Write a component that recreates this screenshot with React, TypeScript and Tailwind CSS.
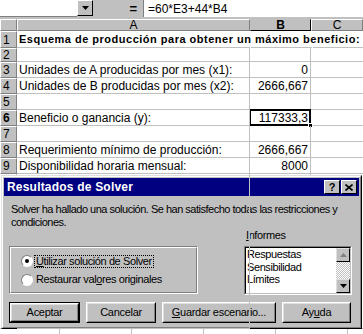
import React from "react";

const font = { fontFamily: '"Liberation Sans", Arial, sans-serif' };

function RowHead({ n, h, bold }: { n: string; h: string; bold?: boolean }) {
  return (
    <div
      className={`w-[17px] shrink-0 ${h} bg-[#c0c0c0] border-t border-l border-t-white border-l-white border-r border-b border-r-[#808080] border-b-[#808080] text-[12px] leading-none flex items-center pl-[2px] ${bold ? "font-bold" : ""}`}
    >
      {n}
    </div>
  );
}

function Row({
  n,
  h,
  a,
  b,
  bold,
  sel,
}: {
  n: string;
  h: string;
  a?: string;
  b?: string;
  bold?: boolean;
  sel?: boolean;
}) {
  return (
    <div className={`flex ${h}`}>
      <RowHead n={n} h={h} bold={sel} />
      <div
        className={`w-[233px] shrink-0 border-b border-[#c0c0c0] flex items-center pl-[2px] whitespace-nowrap overflow-visible z-10 ${bold ? "font-bold text-[11px] tracking-[0.5px] border-r-0" : "text-[12px] border-r"}`}
      >
        {a}
      </div>
      <div
        className={`w-[61px] shrink-0 border-b border-[#c0c0c0] flex items-center justify-end pr-[2px] text-[12px] relative ${bold ? "border-r-0 ml-[1px]" : "border-r"}`}
      >
        {sel && (
          <div className="absolute left-[-1px] top-[-1px] right-[-1px] bottom-[-1px] border-2 border-black">
            <div className="absolute right-[-4px] bottom-[-4px] w-[5px] h-[5px] bg-black border border-white" />
          </div>
        )}
        <span className="relative">{b}</span>
      </div>
      <div className={`flex-1 border-b border-[#c0c0c0] ${bold ? "ml-[1px]" : ""}`} />
    </div>
  );
}

function Btn({
  children,
  w,
  def,
}: {
  children: React.ReactNode;
  w: string;
  def?: boolean;
}) {
  const inner = (
    <div className="flex-1 flex bg-[#c0c0c0] border border-t-white border-l-white border-r-black border-b-black">
      <div className="flex-1 border border-t-[#dfdfdf] border-l-[#dfdfdf] border-r-[#808080] border-b-[#808080] flex items-center justify-center text-[11px] tracking-[-0.3px]">
        {children}
      </div>
    </div>
  );
  if (def) {
    return <div className={`${w} h-[21px] border border-black flex`}>{inner}</div>;
  }
  return <div className={`${w} h-[21px] flex`}>{inner}</div>;
}

function Radio({ checked }: { checked?: boolean }) {
  return (
    <div className="w-[12px] h-[12px] shrink-0 rounded-full bg-white border border-t-[#808080] border-l-[#808080] border-r-white border-b-white flex items-center justify-center">
      {checked && <div className="w-[4px] h-[4px] rounded-full bg-black" />}
    </div>
  );
}

export default function App() {
  return (
    <div
      className="w-[363px] h-[334px] overflow-hidden relative bg-white text-black"
      style={font}
    >
      {/* formula bar */}
      <div className="h-[17px] bg-[#c0c0c0] flex">
        <div className="w-[77px] bg-white border-b border-[#808080]" />
        <div className="w-[16px] h-[16px] bg-[#c0c0c0] border-t border-l border-white border-r border-b border-r-black border-b-black flex items-center justify-center">
          <svg width="7" height="4" viewBox="0 0 7 4">
            <path d="M0 0h7L3.5 4z" fill="#000" />
          </svg>
        </div>
        <div className="w-[50px] flex items-center justify-end pr-[6px] text-[13px] font-bold">
          =
        </div>
        <div className="flex-1 bg-white border-l border-[#808080] flex items-center pl-[4px] text-[12px]">
          =60*E3+44*B4
        </div>
      </div>
      <div className="h-[2px] bg-[#c0c0c0]" />
      {/* header row */}
      <div className="flex h-[12px] text-[12px] leading-none">
        <div className="w-[17px] bg-[#c0c0c0] border-t border-l border-white border-r border-b border-r-[#808080] border-b-[#808080]" />
        <div className="w-[233px] bg-[#c0c0c0] border-t border-l border-white border-r border-b border-r-[#808080] border-b-[#808080] flex items-center justify-center">
          A
        </div>
        <div className="w-[61px] bg-[#c0c0c0] border-t border-l border-[#c0c0c0] border-r border-b border-r-black border-b-black flex items-center justify-center font-bold">
          B
        </div>
        <div className="flex-1 bg-[#c0c0c0] border-t border-l border-white border-r border-b border-r-[#808080] border-b-[#808080] flex items-center justify-center">
          C
        </div>
      </div>
      <Row n="1" h="h-[17px]" a="Esquema de producción para obtener un máximo beneficio:" bold />
      <Row n="2" h="h-[14px]" />
      <Row n="3" h="h-[16px]" a="Unidades de A producidas por mes (x1):" b="0" />
      <Row n="4" h="h-[16px]" a="Unidades de B producidas por mes (x2):" b="2666,667" />
      <Row n="5" h="h-[16px]" />
      <Row n="6" h="h-[16px]" a="Beneficio o ganancia (y):" b="117333,3" sel />
      <Row n="7" h="h-[16px]" />
      <Row n="8" h="h-[16px]" a="Requerimiento mínimo de producción:" b="2666,667" />
      <Row n="9" h="h-[16px]" a="Disponibilidad horaria mensual:" b="8000" />
      <Row n="10" h="h-[155px]" />
      <div className="flex h-[10px]">
        <div className="w-[60px] border-r border-[#c0c0c0]" />
        <div className="w-[72px] border-r border-[#c0c0c0]" />
        <div className="w-[72px] border-r border-[#c0c0c0]" />
        <div className="w-[72px] border-r border-[#c0c0c0]" />
        <div className="w-[72px] border-r border-[#c0c0c0]" />
      </div>

      {/* Dialog */}
      <div className="absolute left-[1px] top-[175px] w-[361px] h-[154px] bg-[#c0c0c0] border border-t-[#dfdfdf] border-l-[#dfdfdf] border-r-black border-b-black">
        <div className="w-full h-full border border-t-white border-l-white border-r-[#808080] border-b-[#808080] p-[1px] flex flex-col">
          <div className="h-[18px] shrink-0 bg-[#000080] flex items-center pl-[3px] pr-[2px]">
            <span className="text-white font-bold text-[12px] tracking-[0.2px] flex-1">
              Resultados de Solver
            </span>
            <div className="w-[16px] h-[14px] bg-[#c0c0c0] border border-t-white border-l-white border-r-black border-b-black flex items-center justify-center text-[11px] font-bold leading-none">
              ?
            </div>
            <div className="w-[16px] h-[14px] ml-[1px] bg-[#c0c0c0] border border-t-white border-l-white border-r-black border-b-black flex items-center justify-center">
              <svg width="8" height="7" viewBox="0 0 8 7">
                <path d="M0.5 0.5L7.5 6.5M7.5 0.5L0.5 6.5" stroke="#000" strokeWidth="1.6" />
              </svg>
            </div>
          </div>
          <div className="pl-[7px] mt-[7px] text-[11px] leading-[13px] tracking-[-0.5px] whitespace-nowrap">
            Solver ha hallado una solución. Se han satisfecho todas las restricciones y
            <br />
            condiciones.
          </div>
          <div className="flex pl-[5px]">
            <div className="w-[189px] h-[48px] mt-[17px] border border-t-[#808080] border-l-[#808080] border-r-white border-b-white">
              <div className="w-full h-full border border-t-white border-l-white border-r-[#808080] border-b-[#808080] flex flex-col justify-center gap-[6px] pl-[10px] text-[11px] tracking-[-0.4px]">
                <div className="flex items-center gap-[1px]">
                  <Radio checked />
                  <span className="border border-dotted border-black px-[1px] leading-[11px]">
                    <u>U</u>tilizar solución de Solver
                  </span>
                </div>
                <div className="flex items-center gap-[1px]">
                  <Radio />
                  <span className="px-[2px] leading-[11px]">
                    Restaurar val<u>o</u>res originales
                  </span>
                </div>
              </div>
            </div>
            <div className="flex flex-col ml-[46px]">
              <div className="text-[11px] leading-[13px] tracking-[-0.4px] pl-[2px]">
                <u>I</u>nformes
              </div>
              <div className="w-[108px] h-[49px] mt-[4px] bg-white border border-t-[#808080] border-l-[#808080] border-r-white border-b-white flex">
                <div className="flex-1 flex border border-t-black border-l-black border-r-[#c0c0c0] border-b-[#c0c0c0]">
                  <div className="flex-1 pl-[1px] text-[11px] leading-[12.5px] tracking-[-0.4px]">
                    <div>Respuestas</div>
                    <div>Sensibilidad</div>
                    <div>Límites</div>
                  </div>
                  <div className="w-[14px] flex flex-col">
                    <div className="h-[14px] bg-[#c0c0c0] border border-t-[#dfdfdf] border-l-[#dfdfdf] border-r-black border-b-black flex items-center justify-center">
                      <svg width="7" height="4" viewBox="0 0 7 4">
                        <path d="M0 4h7L3.5 0z" fill="#808080" />
                      </svg>
                    </div>
                    <div
                      className="flex-1"
                      style={{
                        backgroundImage:
                          "repeating-conic-gradient(#c0c0c0 0 25%, #ffffff 0 50%)",
                        backgroundSize: "2px 2px",
                      }}
                    />
                    <div className="h-[14px] bg-[#c0c0c0] border border-t-[#dfdfdf] border-l-[#dfdfdf] border-r-black border-b-black flex items-center justify-center">
                      <svg width="7" height="4" viewBox="0 0 7 4">
                        <path d="M0 0h7L3.5 4z" fill="#000" />
                      </svg>
                    </div>
                  </div>
                </div>
              </div>
            </div>
          </div>
          <div className="flex pl-[5px] mt-[7px]">
            <Btn w="w-[71px]" def>
              Aceptar
            </Btn>
            <div className="w-[6px]" />
            <Btn w="w-[70px]">Cancelar</Btn>
            <div className="w-[6px]" />
            <Btn w="w-[114px]">
              <span>
                <u>G</u>uardar escenario...
              </span>
            </Btn>
            <div className="w-[6px]" />
            <Btn w="w-[69px]">
              <span>
                Ay<u>u</u>da
              </span>
            </Btn>
          </div>
        </div>
      </div>
    </div>
  );
}
